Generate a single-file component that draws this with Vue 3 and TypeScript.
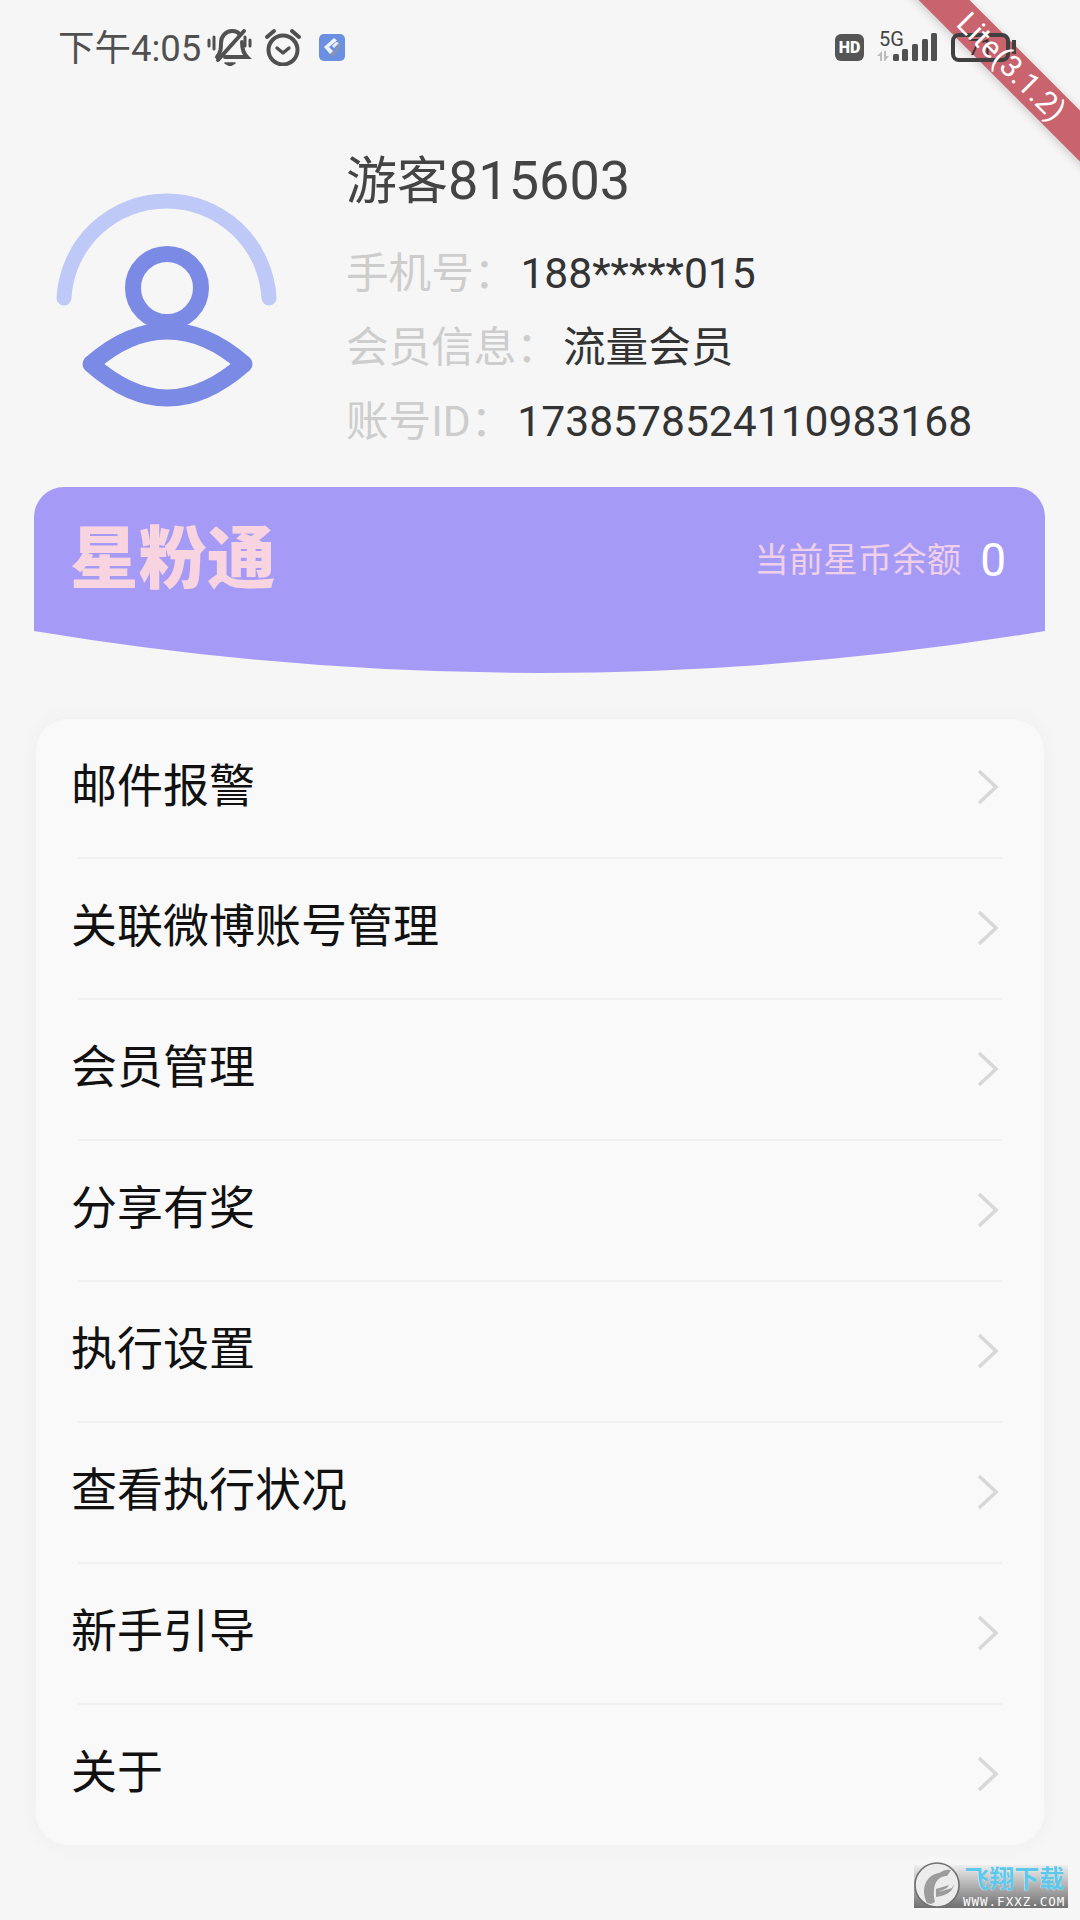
<template>
  <div class="page">
    <div class="ribbon-band"></div>

    <div class="status">
      <div class="status-left">
        <span class="time">下午4:05</span>
        <svg class="ic-bell" width="45" height="38" viewBox="0 0 45 38" fill="none" stroke="#505050" stroke-width="4" stroke-linecap="round">
          <path d="M10 29 C14 24 14 20 14 15 C14 8 19 3 25 3 C29 3 32 5 33 7" />
          <path d="M35 14 C35 20 36 25 40 29 H18" />
          <path d="M11 32 L37 3" />
          <path d="M18 35 H28 L23 38 Z" fill="#505050" stroke-width="1.5" stroke-linejoin="round" />
          <path d="M2 12 V18 M7 9 V21 M38 9 V18 M43 12 V18" stroke-width="3" />
        </svg>
        <svg class="ic-alarm" width="38" height="38" viewBox="0 0 38 38" fill="none" stroke="#505050" stroke-width="4" stroke-linecap="round" stroke-linejoin="round">
          <circle cx="19" cy="22" r="14.5" />
          <path d="M13 20 L19 25 L25 20" stroke-width="3.4" />
          <path d="M3 9 L10 3 M35 9 L28 3" />
        </svg>
        <svg class="ic-app" width="26" height="27" viewBox="0 0 26 27">
          <rect width="26" height="27" rx="5" fill="#6b90e2" />
          <path d="M15 4 L5 13 L11 20 L14 17 L10 13 L18 6.5 Z" fill="#eef2fc" />
          <path d="M20 9 L22 11 L15 22 L11 21 L16 16 Z" fill="#8c93ad" />
          <path d="M20 9 L17 8 L13 12 L15 14 Z" fill="#eef2fc" />
        </svg>
      </div>
      <div class="status-right">
        <span class="hd">HD</span>
        <div class="net">
          <span class="five-g">5G</span>
          <svg width="62" height="28" viewBox="0 0 62 28">
            <path d="M2 23 L7 18 V28 H5 V23 Z M9 28 V18 H11 V23 H14 L10 28 Z" fill="#bdbdbd" />
            <rect x="18" y="21" width="6" height="7" rx="1.5" fill="#505050" />
            <rect x="27" y="16" width="6" height="12" rx="1.5" fill="#505050" />
            <rect x="37" y="11" width="6" height="17" rx="1.5" fill="#505050" />
            <rect x="47" y="6" width="6" height="22" rx="1.5" fill="#505050" />
            <rect x="56" y="0" width="6" height="28" rx="1.5" fill="#505050" />
          </svg>
        </div>
        <div class="battery">
          <span>71</span>
        </div>
        <i class="nub"></i>
      </div>
    </div>

    <div class="header">
      <svg class="avatar" width="230" height="230" viewBox="0 0 230 230" fill="none" stroke-linecap="round" stroke-linejoin="round">
        <path d="M10 108 A102.65 102.65 0 0 1 215 108" stroke="#bfc9f7" stroke-width="15" />
        <circle cx="113" cy="98" r="34" stroke="#7b8ae4" stroke-width="16" />
        <path d="M37 174 C62 152 88 141 113 141 C138 141 165 152 190 174 C165 196 138 208 113 208 C88 208 62 196 37 174 Z" stroke="#7b8ae4" stroke-width="17" />
      </svg>
      <div class="info">
        <div class="name"><span class="name-cn">游客</span>815603</div>
        <div v-for="line in infoLines" :key="line.label" class="info-line">
          <span class="label">{{ line.label }}</span>
          <span class="value">{{ line.value }}</span>
        </div>
      </div>
    </div>

    <div class="banner">
      <span class="brand">星粉通</span>
      <div class="balance">
        <span class="balance-label">当前星币余额</span>
        <span class="balance-num">0</span>
      </div>
    </div>

    <div class="card">
      <template v-for="(item, i) in menu" :key="item">
        <div v-if="i > 0" class="sep"></div>
        <div class="row">
          <span class="row-text">{{ item }}</span>
          <svg class="chevron" width="24" height="36" viewBox="0 0 24 36" fill="none" stroke="#d8d8d8" stroke-width="3.6">
            <path d="M3 2 L20 18 L3 34" />
          </svg>
        </div>
      </template>
    </div>

    <div class="ribbon-text">Lite(3.1.2)</div>

    <div class="watermark">
      <svg width="46" height="46" viewBox="0 0 46 46" fill="none">
        <circle cx="23" cy="23" r="22" fill="#ececec" stroke="#707070" stroke-width="1.6" />
        <path d="M13 41 C6 27 12 13 25 11 C30 8 33 7 37 8 L33 14 C24 14 17 22 21 40 L17 42 Z" fill="#9c9c9c" />
        <path d="M22 27 L35 23 L33 26 L24 30 L38 26 L40 22 C39 31 30 34 22 35 Z" fill="#9c9c9c" />
      </svg>
      <div class="wm-text">
        <span class="wm-cn">飞翔下载</span>
        <span class="wm-en">WWW.FXXZ.COM</span>
      </div>
    </div>
  </div>
</template>

<script setup lang="ts">
const infoLines = [
  { label: "手机号：", value: "188*****015" },
  { label: "会员信息：", value: "流量会员" },
  { label: "账号ID：", value: "1738578524110983168" },
];

const menu = [
  "邮件报警",
  "关联微博账号管理",
  "会员管理",
  "分享有奖",
  "执行设置",
  "查看执行状况",
  "新手引导",
  "关于",
];
</script>

<style>
body {
  background: #f6f6f6;
}
</style>

<style scoped>
.page {
  position: relative;
  width: 1080px;
  height: 1920px;
  overflow: hidden;
  background: #f6f6f6;
  font-family: Roboto, "Noto Sans CJK SC", sans-serif;
}

.status {
  position: relative;
  z-index: 2;
  display: flex;
  justify-content: space-between;
  align-items: center;
  height: 94px;
  padding: 0 64px 0 58px;
}

.status-left,
.status-right {
  display: flex;
  align-items: center;
}

.time {
  margin-top: 3px;
  font-size: 36.5px;
  line-height: 44px;
  color: #505050;
}

.ic-bell {
  margin-left: 6px;
}

.ic-alarm {
  margin-left: 12px;
}

.ic-app {
  margin-left: 17px;
}

.hd {
  width: 29px;
  height: 27px;
  border-radius: 6px;
  background: #555;
  color: #fff;
  font-size: 16px;
  font-weight: 900;
  line-height: 27px;
  text-align: center;
}

.net {
  position: relative;
  width: 62px;
  height: 28px;
  margin: 0 14px 0 11px;
}

.five-g {
  position: absolute;
  left: 4px;
  top: -6px;
  font-size: 20px;
  line-height: 24px;
  color: #444;
}

.battery {
  width: 59px;
  height: 29px;
  box-sizing: border-box;
  border: 4px solid #404040;
  border-radius: 8px;
  text-align: center;
  font-size: 22px;
  line-height: 21px;
  color: #333;
}

.nub {
  width: 4px;
  height: 14px;
  margin-left: 2px;
  background: #404040;
}

.header {
  display: flex;
  padding: 50px 0 29px 54px;
}

.avatar {
  flex: none;
  margin: 46px 62px 0 0;
}

.name {
  margin-bottom: 17px;
  font-size: 54px;
  line-height: 74px;
  color: #444;
}

.name-cn {
  font-size: 51px;
}

.info-line {
  display: flex;
  font-size: 42.6px;
  line-height: 74px;
  white-space: nowrap;
}

.label {
  color: #cdcdcd;
}

.value {
  margin-left: 4px;
  color: #333;
}

.banner {
  display: flex;
  justify-content: space-between;
  align-items: center;
  box-sizing: border-box;
  width: 1011px;
  height: 186px;
  margin-left: 34px;
  padding: 0 39px 40px 36px;
  background: #a59bf6;
  clip-path: path("M0 30 A30 30 0 0 1 30 0 H981 A30 30 0 0 1 1011 30 V144 Q505.5 228 0 144 Z");
}

.brand {
  font-size: 68.5px;
  font-weight: 900;
  line-height: 80px;
  color: #f8d3e0;
}

.balance {
  display: flex;
  align-items: center;
  gap: 19px;
}

.balance-label {
  font-size: 34.5px;
  line-height: 44px;
  color: #efcfea;
}

.balance-num {
  font-size: 46px;
  line-height: 48px;
  color: #fff;
}

.card {
  box-sizing: border-box;
  width: 1008px;
  height: 1126px;
  margin: 46px 0 0 36px;
  border-radius: 32px;
  background: #f9f9f9;
  box-shadow: 0 0 22px rgba(0, 0, 0, 0.035);
}

.sep {
  height: 2px;
  margin: 0 42px;
  background: #f1f1f1;
}

.row {
  display: flex;
  justify-content: space-between;
  align-items: center;
  height: 139px;
  padding: 0 44px 0 35px;
  font-size: 46px;
  color: #111;
}

.row:first-child {
  height: 138px;
}

.row-text {
  margin-top: -13px;
}

.chevron {
  margin-top: -2px;
}

.ribbon-band {
  position: absolute;
  z-index: 1;
  top: 49px;
  left: 861px;
  width: 300px;
  height: 36px;
  transform: rotate(45deg);
  background: #c9636d;
  box-shadow: 0 2px 10px rgba(0, 0, 0, 0.18);
}

.ribbon-text {
  position: absolute;
  z-index: 3;
  top: 49px;
  left: 931px;
  width: 160px;
  transform: rotate(45deg);
  color: #fff;
  font-size: 30.5px;
  line-height: 36px;
  text-align: center;
}

.watermark {
  position: absolute;
  left: 914px;
  top: 1865px;
  display: flex;
  width: 154px;
  height: 43px;
  background: linear-gradient(#eeeeee, #707070);
}

.watermark svg {
  flex: none;
  margin-top: -3px;
}

.wm-text {
  display: flex;
  flex-direction: column;
  align-items: center;
  margin-left: 3px;
}

.wm-cn {
  font-size: 25px;
  font-weight: 700;
  line-height: 30px;
  color: #5cc8ec;
  text-shadow: 0 0 1px #fff;
}

.wm-en {
  font-family: "DejaVu Sans Mono", monospace;
  font-size: 12.5px;
  letter-spacing: 1px;
  line-height: 13px;
  color: #fff;
}
</style>
